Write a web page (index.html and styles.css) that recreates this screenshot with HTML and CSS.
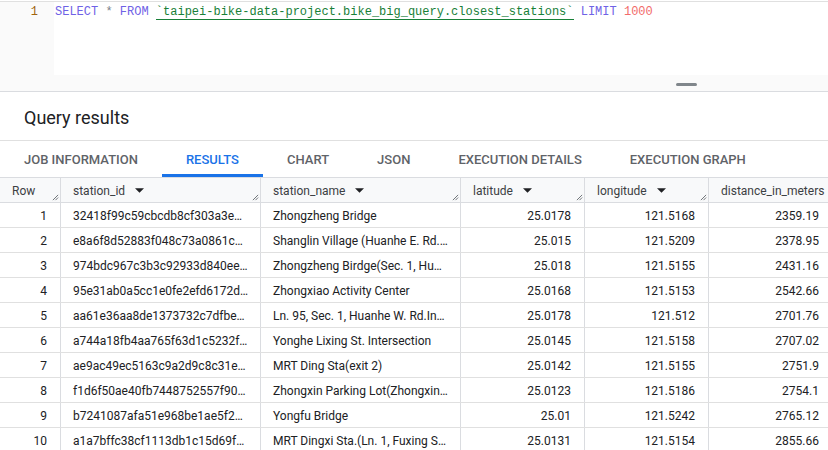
FILE: index.html
```html
<!DOCTYPE html>
<html>
<head>
<meta charset="utf-8">
<link rel="stylesheet" href="styles.css">
</head>
<body>
<div class="editor">
  <div class="editor-body">
    <div class="gutter"><span class="ln">1</span></div>
    <div class="code"><span class="kw">SELECT</span> <span class="op">*</span> <span class="kw">FROM</span> <span class="tbl">`taipei-bike-data-project.bike_big_query.closest_stations`</span> <span class="kw">LIMIT</span> <span class="num">1000</span></div>
  </div>
  <div class="editor-foot"><span class="handle"></span></div>
</div>
<div class="results-head">Query results</div>
<div class="tabs">
  <div class="tab">JOB INFORMATION</div>
  <div class="tab active">RESULTS</div>
  <div class="tab">CHART</div>
  <div class="tab">JSON</div>
  <div class="tab">EXECUTION DETAILS</div>
  <div class="tab">EXECUTION GRAPH</div>
</div>
<div class="grid">
  <div class="row head">
    <div class="cell c-row"><span class="txt">Row</span><svg class="rz" viewBox="0 0 8 8"><path d="M1 7L7 1M4 7L7 4" stroke="#5f6368" stroke-width="1"/></svg></div>
    <div class="cell c-id"><span class="txt">station_id</span><svg class="sort" viewBox="0 0 10 5"><path d="M0 0H10L5 5Z"/></svg><svg class="rz" viewBox="0 0 8 8"><path d="M1 7L7 1M4 7L7 4" stroke="#5f6368" stroke-width="1"/></svg></div>
    <div class="cell c-name"><span class="txt">station_name</span><svg class="sort" viewBox="0 0 10 5"><path d="M0 0H10L5 5Z"/></svg><svg class="rz" viewBox="0 0 8 8"><path d="M1 7L7 1M4 7L7 4" stroke="#5f6368" stroke-width="1"/></svg></div>
    <div class="cell c-num"><span class="txt">latitude</span><svg class="sort" viewBox="0 0 10 5"><path d="M0 0H10L5 5Z"/></svg><svg class="rz" viewBox="0 0 8 8"><path d="M1 7L7 1M4 7L7 4" stroke="#5f6368" stroke-width="1"/></svg></div>
    <div class="cell c-num"><span class="txt">longitude</span><svg class="sort" viewBox="0 0 10 5"><path d="M0 0H10L5 5Z"/></svg><svg class="rz" viewBox="0 0 8 8"><path d="M1 7L7 1M4 7L7 4" stroke="#5f6368" stroke-width="1"/></svg></div>
    <div class="cell c-num c-last"><span class="txt">distance_in_meters</span><svg class="rz" viewBox="0 0 8 8"><path d="M1 7L7 1M4 7L7 4" stroke="#5f6368" stroke-width="1"/></svg></div>
  </div>
  <div class="row"><div class="cell c-row r">1</div><div class="cell c-id"><span class="txt">32418f99c59cbcdb8cf303a3e…</span></div><div class="cell c-name"><span class="txt">Zhongzheng Bridge</span></div><div class="cell c-num r">25.0178</div><div class="cell c-num r">121.5168</div><div class="cell c-num r">2359.19</div></div>
  <div class="row"><div class="cell c-row r">2</div><div class="cell c-id"><span class="txt">e8a6f8d52883f048c73a0861c…</span></div><div class="cell c-name"><span class="txt">Shanglin Village (Huanhe E. Rd.…</span></div><div class="cell c-num r">25.015</div><div class="cell c-num r">121.5209</div><div class="cell c-num r">2378.95</div></div>
  <div class="row"><div class="cell c-row r">3</div><div class="cell c-id"><span class="txt">974bdc967c3b3c92933d840ee…</span></div><div class="cell c-name"><span class="txt">Zhongzheng Birdge(Sec. 1, Hu…</span></div><div class="cell c-num r">25.018</div><div class="cell c-num r">121.5155</div><div class="cell c-num r">2431.16</div></div>
  <div class="row"><div class="cell c-row r">4</div><div class="cell c-id"><span class="txt">95e31ab0a5cc1e0fe2efd6172d…</span></div><div class="cell c-name"><span class="txt">Zhongxiao Activity Center</span></div><div class="cell c-num r">25.0168</div><div class="cell c-num r">121.5153</div><div class="cell c-num r">2542.66</div></div>
  <div class="row"><div class="cell c-row r">5</div><div class="cell c-id"><span class="txt">aa61e36aa8de1373732c7dfbe…</span></div><div class="cell c-name"><span class="txt">Ln. 95, Sec. 1, Huanhe W. Rd.In…</span></div><div class="cell c-num r">25.0178</div><div class="cell c-num r">121.512</div><div class="cell c-num r">2701.76</div></div>
  <div class="row"><div class="cell c-row r">6</div><div class="cell c-id"><span class="txt">a744a18fb4aa765f63d1c5232f…</span></div><div class="cell c-name"><span class="txt">Yonghe Lixing St. Intersection</span></div><div class="cell c-num r">25.0145</div><div class="cell c-num r">121.5158</div><div class="cell c-num r">2707.02</div></div>
  <div class="row"><div class="cell c-row r">7</div><div class="cell c-id"><span class="txt">ae9ac49ec5163c9a2d9c8c31e…</span></div><div class="cell c-name"><span class="txt">MRT Ding Sta(exit 2)</span></div><div class="cell c-num r">25.0142</div><div class="cell c-num r">121.5155</div><div class="cell c-num r">2751.9</div></div>
  <div class="row"><div class="cell c-row r">8</div><div class="cell c-id"><span class="txt">f1d6f50ae40fb7448752557f90…</span></div><div class="cell c-name"><span class="txt">Zhongxin Parking Lot(Zhongxin…</span></div><div class="cell c-num r">25.0123</div><div class="cell c-num r">121.5186</div><div class="cell c-num r">2754.1</div></div>
  <div class="row"><div class="cell c-row r">9</div><div class="cell c-id"><span class="txt">b7241087afa51e968be1ae5f2…</span></div><div class="cell c-name"><span class="txt">Yongfu Bridge</span></div><div class="cell c-num r">25.01</div><div class="cell c-num r">121.5242</div><div class="cell c-num r">2765.12</div></div>
  <div class="row"><div class="cell c-row r">10</div><div class="cell c-id"><span class="txt">a1a7bffc38cf1113db1c15d69f…</span></div><div class="cell c-name"><span class="txt">MRT Dingxi Sta.(Ln. 1, Fuxing S…</span></div><div class="cell c-num r">25.0131</div><div class="cell c-num r">121.5154</div><div class="cell c-num r">2855.66</div></div>
</div>
</body>
</html>
```

FILE: styles.css
```css
* { box-sizing: border-box; }
html, body { margin: 0; padding: 0; background: #fff; }
body {
  width: 828px;
  height: 450px;
  overflow: hidden;
  font-family: Roboto, "Liberation Sans", sans-serif;
  color: #202124;
}
.editor {
  margin-top: 1px;
  border-top: 1px solid #e0e0e0;
  border-bottom: 1px solid #dadce0;
  background: #fafafa;
}
.editor-body {
  display: flex;
  height: 73px;
}
.gutter {
  width: 54px;
  flex: none;
  background: #fafafa;
  padding-right: 16px;
  text-align: right;
  font-family: "Liberation Mono", monospace;
  font-size: 12px;
  line-height: 18px;
  padding-top: 1px;
}
.ln { color: #a0630c; }
.code {
  flex: 1;
  background: #fff;
  font-family: "Liberation Mono", monospace;
  font-size: 12px;
  line-height: 18px;
  padding-top: 1px;
  padding-left: 1px;
  white-space: pre;
  color: #5f6368;
}
.kw { color: #6f62e6; }
.op { color: #7a7f8a; }
.tbl { color: #188038; border-bottom: 1px solid #188038; }
.num { color: #f26b6b; }
.editor-foot {
  height: 16px;
  display: flex;
  align-items: center;
  padding-left: 676px;
}
.handle {
  width: 21px;
  height: 3px;
  border-radius: 2px;
  background: #80868b;
  margin-top: 3px;
}
.results-head {
  height: 49px;
  border-bottom: 1px solid #e0e0e0;
  display: flex;
  align-items: center;
  padding-left: 24px;
  padding-top: 2px;
  font-size: 18px;
  color: #202124;
}
.tabs {
  display: flex;
  height: 37px;
  border-bottom: 1px solid #dadce0;
}
.tab {
  padding: 0 24px;
  height: 36px;
  display: flex;
  align-items: center;
  font-size: 13px;
  font-weight: 500;
  color: #5f6368;
  white-space: nowrap;
}
.tab.active {
  color: #1a73e8;
  border-bottom: 3px solid #1a73e8;
  padding-top: 3px;
}
.grid { width: 840px; }
.row {
  display: flex;
  height: 25px;
  border-bottom: 1px solid #e0e0e0;
}
.row.head {
  background: #f8f9fa;
  border-bottom: 1px solid #dadce0;
}
.cell {
  position: relative;
  flex: none;
  height: 100%;
  display: flex;
  align-items: center;
  padding: 1px 12px 0 12px;
  border-right: 1px solid #dadce0;
  font-size: 12px;
  white-space: nowrap;
  overflow: hidden;
  color: #202124;
}
.txt {
  white-space: nowrap;
  flex: none;
}
.head .cell { color: #3c4043; }
.cell.r { justify-content: flex-end; padding-right: 13px; }
.c-row { width: 61px; }
.c-id { width: 200px; }
.c-name { width: 200px; }
.c-num { width: 124px; }
.c-last { width: 140px; }
.sort {
  width: 9px;
  height: 5px;
  margin-left: 10px;
  flex: none;
  fill: #202124;
}
.rz {
  position: absolute;
  right: 1px;
  bottom: 1px;
  width: 7px;
  height: 7px;
}
```
